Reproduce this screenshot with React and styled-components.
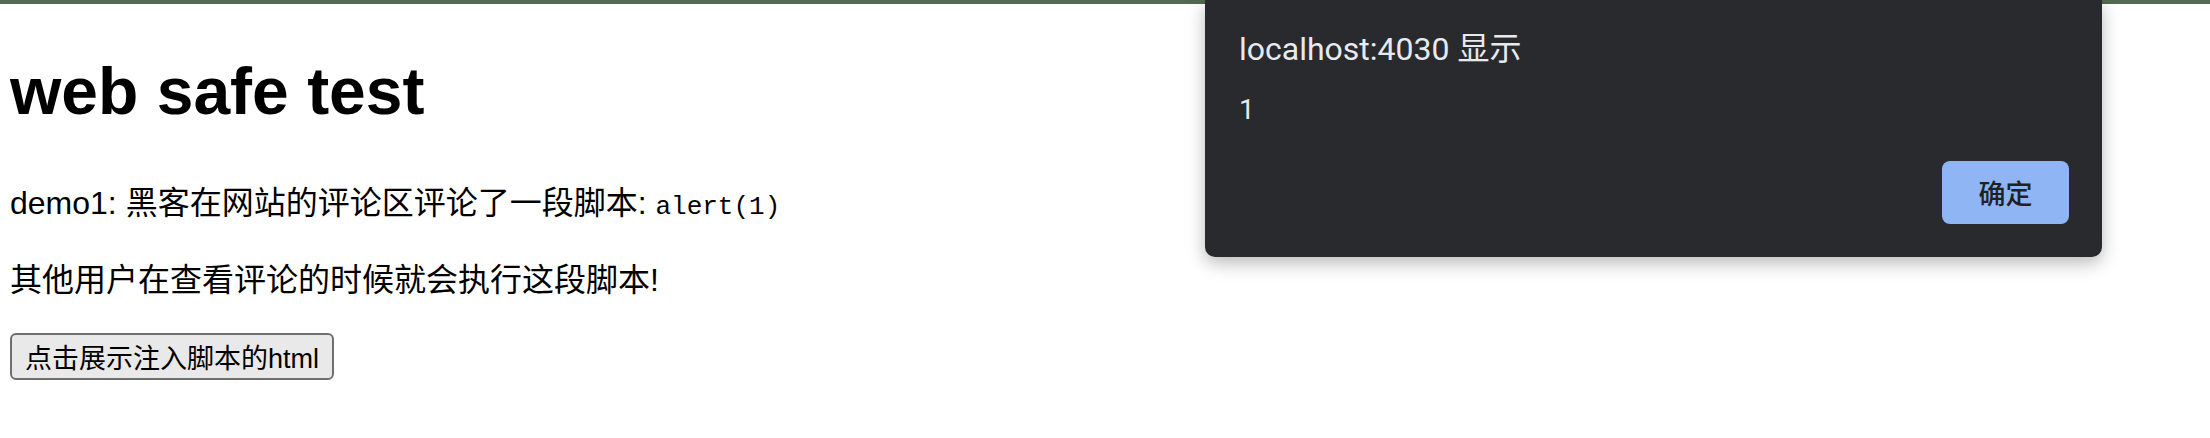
import React from "react";
import styled, { createGlobalStyle } from "styled-components";

const GlobalStyle = createGlobalStyle`
  body {
    margin: 0;
    background: #ffffff;
  }
`;

const App = () => {
  return (
    <Page>
      <GlobalStyle />
      <TopBar />
      <Content>
        <Title>web safe test</Title>
        <Text>
          demo1: 黑客在网站的评论区评论了一段脚本: <Code>alert(1)</Code>
        </Text>
        <Text>其他用户在查看评论的时候就会执行这段脚本!</Text>
        <ShowButton>点击展示注入脚本的html</ShowButton>
      </Content>

      <Dialog>
        <DialogTitle>localhost:4030 显示</DialogTitle>
        <DialogMessage>1</DialogMessage>
        <DialogFooter>
          <OkButton>确定</OkButton>
        </DialogFooter>
      </Dialog>
    </Page>
  );
};

export default App;

const Page = styled.div`
  position: relative;
  width: 100%;
  min-height: 438px;
  overflow: hidden;
  font-family: "Liberation Sans", "Noto Sans CJK SC", sans-serif;
  color: #000;
`;

const TopBar = styled.div`
  height: 4px;
  background-color: #526a51;
`;

const Content = styled.div`
  padding: 0 10px;
  display: flex;
  flex-direction: column;
  align-items: flex-start;
`;

const Title = styled.h1`
  margin: 42px 0 46px;
  font-size: 66px;
  line-height: 90px;
  font-weight: bold;
`;

const Text = styled.p`
  margin: 0 0 30px;
  font-size: 32px;
  line-height: 43px;
`;

const Code = styled.code`
  font-family: "Liberation Mono", monospace;
  font-size: 26px;
`;

const ShowButton = styled.button`
  margin-top: 1px;
  height: 47px;
  padding: 0 13px;
  font-family: "Liberation Sans", "Noto Sans CJK SC", sans-serif;
  font-size: 27px;
  color: #000;
  background-color: #e9e9e9;
  border: 2px solid #6f6f6f;
  border-radius: 6px;
`;

const Dialog = styled.div`
  position: absolute;
  top: 0;
  left: 1205px;
  width: 897px;
  height: 257px;
  box-sizing: border-box;
  padding: 29px 33px 33px 34px;
  display: flex;
  flex-direction: column;
  background-color: #292a2d;
  border-radius: 0 0 10px 10px;
  box-shadow: 0 6px 18px rgba(0, 0, 0, 0.28);
  font-family: Roboto, "Noto Sans CJK SC", sans-serif;
  color: #e8eaed;
`;

const DialogTitle = styled.div`
  font-size: 32px;
  line-height: 40px;
`;

const DialogMessage = styled.div`
  margin-top: 23px;
  font-size: 28px;
  line-height: 36px;
`;

const DialogFooter = styled.div`
  margin-top: auto;
  display: flex;
  justify-content: flex-end;
`;

const OkButton = styled.button`
  width: 127px;
  height: 63px;
  border: 0;
  border-radius: 8px;
  background-color: #8fb5f4;
  color: #202124;
  font-family: Roboto, "Noto Sans CJK SC", sans-serif;
  font-size: 27px;
  font-weight: 500;
`;
